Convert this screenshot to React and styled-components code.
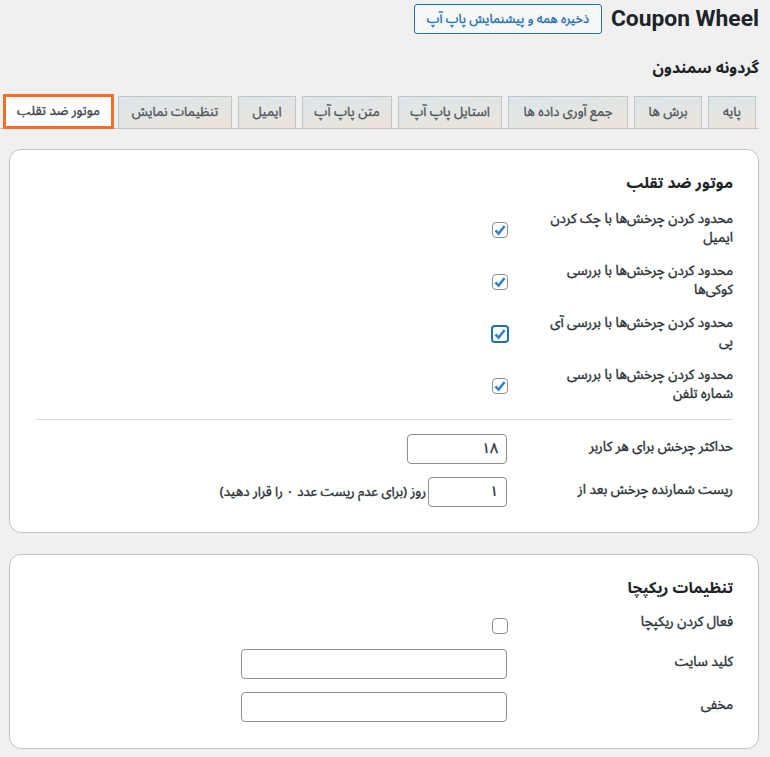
import React from 'react';
import styled, { createGlobalStyle } from 'styled-components';

const FONT = '"Noto Sans Arabic", Vazirmatn, "Noto Naskh Arabic", "DejaVu Sans", sans-serif';

const Global = createGlobalStyle`
  html, body { margin: 0; padding: 0; background: #f0f0f1; }
  body { font-family: ${FONT}; color: #1d2327; overflow: hidden; }
`;

const Page = styled.div`direction: rtl; width: 770px; height: 757px; overflow: hidden; box-sizing: border-box; padding: 4px 11px 0 11px;`;
const TopBar = styled.div`display: flex; align-items: center; gap: 9px; height: 30px;`;
const Title = styled.h1`margin: 0; font: 700 22.8px/30px Roboto, sans-serif; direction: ltr;`;
const PreviewBtn = styled.button`
  font: 400 12.8px/26px ${FONT}; -webkit-text-stroke: .35px #2271b1; height: 30px; width: 188px; padding: 0; box-sizing: border-box;
  color: #2271b1; background: #f6f7f7; border: 1px solid #2271b1; border-radius: 3px; white-space: nowrap; overflow: hidden;
`;
const SubTitle = styled.h2`margin: 23px 0 0; font-size: 15.7px; font-weight: 700; line-height: 22px; height: 22px;`;
const Tabs = styled.div`
  display: flex; gap: 6px; margin: 17px 0 0 -11px; padding: 0 3px 0 0; height: 33px; box-sizing: border-box; align-items: flex-end;
  border-bottom: 1px solid #c3c4c7;
`;
const Tab = styled.div`
  width: ${p => p.$w}px; height: 32px; box-sizing: border-box; text-align: center; font: 400 13.2px/30px ${FONT};
  -webkit-text-stroke: .35px #50575e; color: #50575e; border: 1px solid #c3c4c7; border-bottom: 0; white-space: nowrap;
  background: linear-gradient(172deg, #dae7ec 0%, #e4e5e2 50%, #ece3da 100%);
`;
const ActiveTab = styled(Tab)`
  height: 35px; line-height: 29px; margin: 0 -2px -1px 0; background: #fff; color: #3c434a; -webkit-text-stroke: .35px #3c434a;
  border: 3px solid #f56e28;
`;
const Card = styled.section`
  margin: ${p => p.$mt}px 0 0 -2px; background: #fff; border: 1px solid #c3c4c7; border-radius: 12px;
  padding: 21px 25px 0 26px; box-sizing: border-box; height: ${p => p.$h}px;
`;
const CardTitle = styled.h3`margin: 0 0 ${p => p.$mb}px; font-size: 15.6px; font-weight: 700; line-height: 26px;`;
const Row = styled.div`display: flex; align-items: center; height: ${p => p.$h || 38}px; margin-bottom: ${p => p.$mb ?? 14}px;`;
const Label = styled.div`
  width: 200px; flex: none; font-size: 13.45px; font-weight: 400; line-height: 19px; color: #2c3338; -webkit-text-stroke: .4px #2c3338;
  white-space: nowrap; position: relative; top: -2px;
`;
const WrappedLabel = styled(Label)`top: 1px;`;
const Field = styled.div`
  margin-right: 26px; display: flex; align-items: center; gap: 2px; font-size: 13.2px; color: #2c3338; -webkit-text-stroke: .4px #2c3338; white-space: nowrap;
`;
const Box = styled.span`
  width: 16px; height: 16px; margin-right: -1px; box-sizing: border-box; border: 1px solid #8c8f94; border-radius: 4px; background: #fff;
  display: flex; align-items: center; justify-content: center; position: relative; top: 2px;
  ${p => p.$focus && 'width: 18px; height: 18px; margin-right: -2px; border: 2px solid #2271b1;'}
`;
const TextBox = styled.div`
  width: ${p => p.$w}px; height: 30px; box-sizing: border-box; border: 1px solid #8c8f94; border-radius: 4px; background: #fff;
  padding: 0 8px; font-size: 14px; line-height: 28px; color: #2c3338;
`;
const Divider = styled.hr`border: 0; border-top: 1px solid #dcdcde; margin: 0 0 14px;`;

const Check = () => (
  <svg width="14" height="14" viewBox="0 0 14 14"><path d="M2.4 7.4 5.6 10.6 11.6 3" fill="none" stroke="#3582c4" strokeWidth="2.6" /></svg>
);

const CheckRow = ({ children, focus, mb }) => (
  <Row $mb={mb}>
    <WrappedLabel>{children}</WrappedLabel>
    <Field><Box $focus={focus}><Check /></Box></Field>
  </Row>
);

const tabs = [
  ['پایه', 48], ['برش ها', 68], ['جمع آوری داده ها', 120], ['استایل پاپ آپ', 104], ['متن پاپ آپ', 90], ['ایمیل', 58], ['تنظیمات نمایش', 114],
];

export default function App() {
  return (
    <Page>
      <Global />
      <TopBar>
        <Title>Coupon Wheel</Title>
        <PreviewBtn>ذخیره همه و پیشنمایش پاپ آپ</PreviewBtn>
      </TopBar>
      <SubTitle>گردونه سمندون</SubTitle>
      <Tabs>
        {tabs.map(([t, w]) => <Tab key={t} $w={w}>{t}</Tab>)}
        <ActiveTab $w={111}>موتور ضد تقلب</ActiveTab>
      </Tabs>
      <Card $h={384} $mt={20}>
        <CardTitle $mb={12}>موتور ضد تقلب</CardTitle>
        <CheckRow>محدود کردن چرخش‌ها با چک کردن<br />ایمیل</CheckRow>
        <CheckRow>محدود کردن چرخش‌ها با بررسی<br />کوکی‌ها</CheckRow>
        <CheckRow focus>محدود کردن چرخش‌ها با بررسی آی<br />پی</CheckRow>
        <CheckRow mb={16}>محدود کردن چرخش‌ها با بررسی<br />شماره تلفن</CheckRow>
        <Divider />
        <Row $h={30} $mb={13}>
          <Label>حداکثر چرخش برای هر کاربر</Label>
          <Field><TextBox $w={100}>۱۸</TextBox></Field>
        </Row>
        <Row $h={30}>
          <Label>ریست شمارنده چرخش بعد از</Label>
          <Field><TextBox $w={79}>۱</TextBox>روز (برای عدم ریست عدد ۰ را قرار دهید)</Field>
        </Row>
      </Card>
      <Card $h={195} $mt={21}>
        <CardTitle $mb={11}>تنظیمات ریکپچا</CardTitle>
        <Row $h={22} $mb={14}>
          <Label>فعال کردن ریکپچا</Label>
          <Field><Box /></Field>
        </Row>
        <Row $h={30} $mb={13}>
          <Label>کلید سایت</Label>
          <Field><TextBox $w={266} /></Field>
        </Row>
        <Row $h={30}>
          <Label>مخفی</Label>
          <Field><TextBox $w={266} /></Field>
        </Row>
      </Card>
    </Page>
  );
}
